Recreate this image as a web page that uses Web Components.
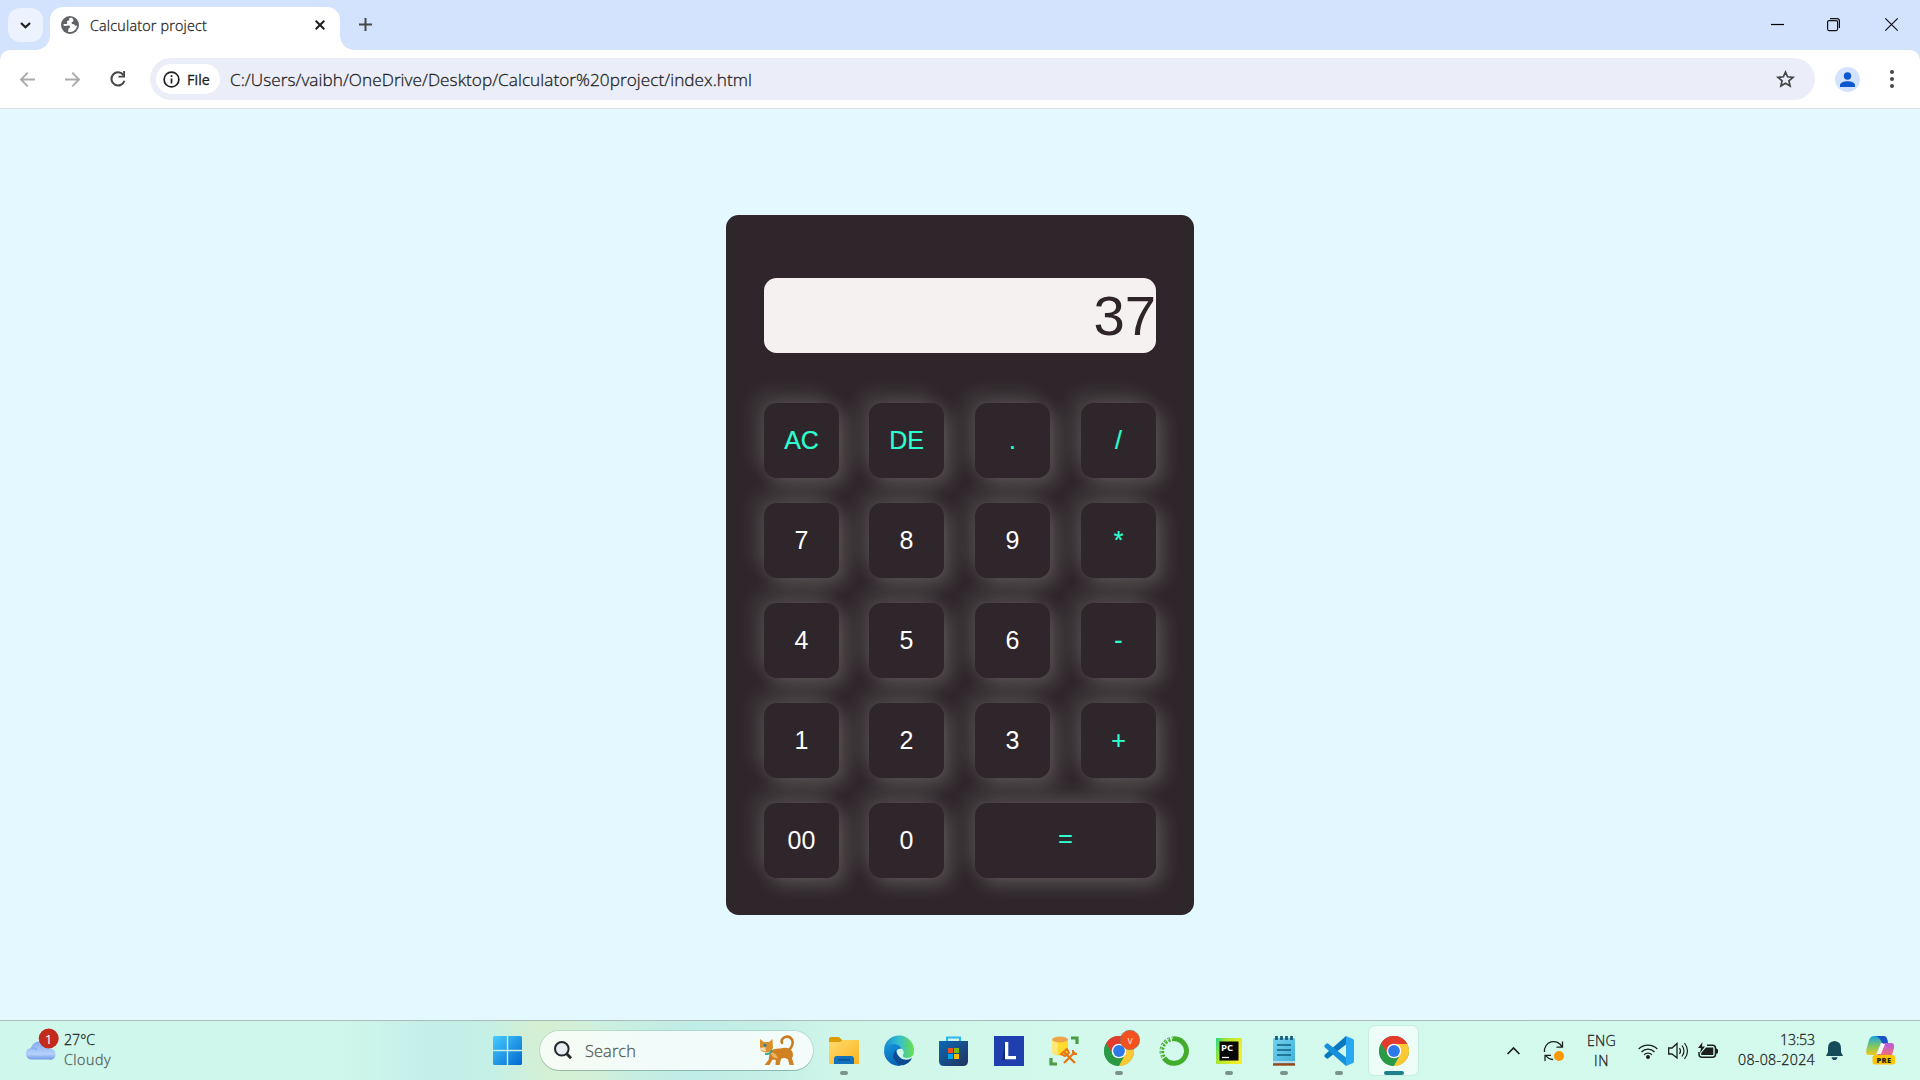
<!DOCTYPE html>
<html lang="en">
<head>
<meta charset="utf-8">
<title>Calculator project</title>
<style>
html,body{margin:0;height:100%;overflow:hidden}
body{font-family:"Open Sans","Noto Sans",sans-serif;color:#1f1f1f}
</style>
</head>
<body>
<desktop-screen></desktop-screen>
<script>
const define=(name,css,html,extra)=>customElements.define(name,class extends HTMLElement{
  connectedCallback(){
    if(this.shadowRoot)return;
    const root=this.attachShadow({mode:'open'});
    const t=document.createElement('template');
    t.innerHTML=`<style>*{box-sizing:border-box}svg{display:block;overflow:visible}${css}</style>${html}`;
    root.append(t.content.cloneNode(true));
    if(extra)extra(this,root);
  }
});

// Text run that spreads its letters to fill the given width.
define('fit-text',`:host{display:block;white-space:nowrap;flex:none;font-weight:300;-webkit-text-stroke:.3px currentColor}span{display:inline-block}`,`<span><slot></slot></span>`,(host,root)=>{
  const s=root.querySelector('span'),n=host.textContent.length,w=+host.getAttribute('w');
  const cur=s.getBoundingClientRect().width;
  s.style.letterSpacing=((w-cur)/n)+'px';
  host.style.width=w+'px';
});

const chromeLogo=`<circle cx="15" cy="15" r="15" fill="#34a853"/><path d="M15 15L2 7.5A15 15 0 0 1 28 7.5L28 8.2H15z" fill="#e33b2e"/><path d="M2 7.5A15 15 0 0 1 28 7.5L15 8.2L9 18.5z" fill="#e33b2e"/><path d="M28 7.6A15 15 0 0 1 14.7 30L21 18.5L15 8H28z" fill="#fcc934"/><path d="M2 7.5A15 15 0 0 0 14.7 30L21.2 18.6L9 18.6z" fill="#2a9a47"/><circle cx="15" cy="15" r="7.3" fill="#fff"/><circle cx="15" cy="15" r="5.9" fill="#2f78e8"/>`;

define('browser-tabs',`
:host{display:flex;height:50px;background:#d3e2fd;align-items:flex-start;padding-left:8px}
.down{width:35px;height:34px;border-radius:12px;background:#ecf2fe;margin:8px 7px 0 0;display:flex;align-items:center;justify-content:center}
.tab{position:relative;width:290px;height:43px;margin-top:7px;background:#fff;border-radius:13px 13px 0 0;display:flex;align-items:center;padding:0 15px 7px 11px}
.tab:before,.tab:after{content:"";position:absolute;bottom:0;width:14px;height:14px}
.tab:before{left:-14px;background:radial-gradient(circle at 0 0,transparent 13.5px,#fff 14px)}
.tab:after{right:-14px;background:radial-gradient(circle at 100% 0,transparent 13.5px,#fff 14px)}
fit-text{font-size:14.3px;margin-left:11px;flex:1;line-height:20px;padding-top:2px}
.plus{margin:18px 0 0 19px}
.win{margin-left:auto;display:flex;gap:44px;padding:18px 22px 0 0}
`,`<div class="down"><svg width="11" height="7"><path d="M1 1L5.5 5.3L10 1" fill="none" stroke="#1f1f1f" stroke-width="2.2"/></svg></div>
<div class="tab"><svg width="18" height="18" viewBox="0 0 18 18"><circle cx="9" cy="9" r="9" fill="#5f6368"/><path d="M11 1.700C8 1.400 7.500 3 8.500 4.200C6.500 4.200 5.400 5.300 6.200 6.700C7 8 5 8.200 3 8C2.600 8.200 2.300 8.600 2.200 9.200C5 10.800 6 9 8 9.600C10 10.300 9 12 7.600 12.400C6.900 13.200 7.500 14.600 7.200 15.900C12 16.800 15.700 13.500 16.100 9.500C14.600 10.200 13 9.400 13.400 8.200C11.500 8.300 10.400 7.600 10.500 6.200C12.700 6 13.200 4 11 1.700z" fill="#fff"/></svg><fit-text w="117">Calculator project</fit-text>
<svg style="margin-left:auto" width="10" height="10"><path d="M.7.7L9.3 9.3M9.3.7L.7 9.3" stroke="#1f1f1f" stroke-width="2"/></svg></div>
<svg class="plus" width="13" height="13"><path d="M6.5 0V13M0 6.5H13" stroke="#444746" stroke-width="2"/></svg>
<div class="win"><svg width="13" height="13"><path d="M0 6.5H13" stroke="#000" stroke-width="1.2"/></svg>
<svg style="margin:0 1px 0 -1px" width="13" height="13"><rect x=".6" y="2.6" width="10" height="10" rx="1.5" fill="none" stroke="#111" stroke-width="1.2"/><path d="M3 .6H10Q12.4.6 12.4 3V10" fill="none" stroke="#111" stroke-width="1.2"/></svg>
<svg width="13" height="13"><path d="M.3.3L12.7 12.7M12.7.3L.3 12.7" stroke="#111" stroke-width="1.2"/></svg></div>`);

define('browser-toolbar',`
:host{display:block;height:59px;background:#d3e2fd}
.bar{height:59px;background:#fff;border-bottom:1px solid #dadde1;border-radius:10px 10px 0 0;display:flex;align-items:center;padding:0 22px 0 20px}
.bar>*{flex:none}
.omni{width:1665px;height:42px;border-radius:21px;background:#ebeef8;display:flex;align-items:center;padding:0 20px 0 6px;margin-left:24px}
.chip{width:64px;height:30px;border-radius:15px;background:#fff;display:flex;align-items:center;padding-left:7px;gap:7px;margin-right:10px}
.chip fit-text{font-size:14.3px;font-weight:400}
.url{font-size:17.2px;padding-top:1px}
.user{width:25px;height:25px;border-radius:50%;background:#d3e3fd;margin:0 30px 0 20px}
`,`<div class="bar"><svg width="15" height="15"><path d="M15 7.5H1M7.7.7L1 7.5L7.7 14.3" fill="none" stroke="#a9abad" stroke-width="1.9"/></svg>
<svg style="margin-left:30px" width="15" height="15"><path d="M0 7.5H14M7.3.7L14 7.5L7.3 14.3" fill="none" stroke="#a9abad" stroke-width="1.9"/></svg>
<svg style="margin-left:30px" width="16" height="16"><path d="M13.5 4.2A6.6 6.6 0 1 0 14.4 9.7" fill="none" stroke="#444746" stroke-width="2"/><path d="M15 0V6.5H8.5V4.7H13.2V0z" fill="#444746"/></svg>
<div class="omni"><div class="chip"><svg width="17" height="17"><circle cx="8.5" cy="8.5" r="7.4" fill="none" stroke="#1f1f1f" stroke-width="1.7"/><path d="M8.5 7.5V12.5M8.5 4.3V6" stroke="#1f1f1f" stroke-width="1.7"/></svg><fit-text w="23">File</fit-text></div>
<fit-text class="url" w="522">C:/Users/vaibh/OneDrive/Desktop/Calculator%20project/index.html</fit-text>
<svg style="margin-left:auto" width="19" height="18" viewBox="0 0 19 18"><path d="M9.5 2L11.6 6.8L17 7.3L12.9 10.8L14.1 16L9.5 13.2L4.9 16L6.1 10.8L2 7.3L7.4 6.8z" fill="none" stroke="#444746" stroke-width="1.7"/></svg></div>
<div class="user"><svg width="25" height="25"><circle cx="12.5" cy="9" r="3.7" fill="#0b57d0"/><path d="M5 20V18C5 15.5 9 14.2 12.5 14.2S20 15.5 20 18V20z" fill="#0b57d0"/></svg></div>
<svg width="4" height="18"><circle cx="2" cy="2" r="2" fill="#444746"/><circle cx="2" cy="9" r="2" fill="#444746"/><circle cx="2" cy="16" r="2" fill="#444746"/></svg></div>`);

define('calc-key',`
:host{display:flex;align-items:center;justify-content:center;width:75px;height:75px;border-radius:12.5px;background:#2e262a;color:#fff;font:25px "Liberation Sans",Arial,sans-serif;box-shadow:-10px -10px 18.75px rgba(250,255,245,.11),6.25px 6.25px 18.75px rgba(250,255,245,.21)}
:host([op]){color:#2dffd0;-webkit-text-stroke:.2px #2dffd0}
:host([wide]){width:181px;padding-bottom:4px}
`,`<slot></slot>`);

define('calc-pad',`
:host{display:block;width:468px;height:700px;border-radius:12.5px;background:#2e262a;padding:63px 38px 0}
.screen{height:75px;border-radius:12.5px;background:#f5f1f0;color:#2f2529;font:56.25px/75px "Liberation Sans",Arial,sans-serif;text-align:right;margin-bottom:50px}
.row{display:grid;grid-template-columns:105px 106px 106px 75px;margin-bottom:25px}
`,`<div class="screen">37</div>
<div class="row"><calc-key op>AC</calc-key><calc-key op>DE</calc-key><calc-key op>.</calc-key><calc-key op>/</calc-key></div>
<div class="row"><calc-key>7</calc-key><calc-key>8</calc-key><calc-key>9</calc-key><calc-key op>*</calc-key></div>
<div class="row"><calc-key>4</calc-key><calc-key>5</calc-key><calc-key>6</calc-key><calc-key op>-</calc-key></div>
<div class="row"><calc-key>1</calc-key><calc-key>2</calc-key><calc-key>3</calc-key><calc-key op>+</calc-key></div>
<div class="row"><calc-key>00</calc-key><calc-key>0</calc-key><calc-key op wide>=</calc-key></div>`);

define('task-app',`
:host{position:relative;display:flex;flex:none;width:49px;height:49px;border-radius:6px;margin-right:6px;align-items:center;justify-content:center}
:host([active]){background:rgba(255,255,255,.6);box-shadow:0 0 0 1px rgba(0,60,50,.06)}
.mark{position:absolute;bottom:0;left:20.5px;width:8px;height:4px;border-radius:2px;background:#7c938c;display:none}
:host([run]) .mark{display:block}
:host([active]) .mark{display:block;left:14.5px;width:20px;background:#20808e}
`,`<slot></slot><div class="mark"></div>`);

define('task-bar',`
:host{display:block;height:60px;border-top:1px solid #a9bcb9;background:
radial-gradient(ellipse 70px 60px at 560px 45px,rgba(218,240,206,.8),transparent),
radial-gradient(ellipse 60px 45px at 545px 0,rgba(214,238,208,.9),transparent),
linear-gradient(90deg,#d0f7ec 0,#d0f7eb 340px,#c3efe9 430px,#c5f0e6 500px,#cdf0df 590px,#c0ece6 690px,#c6f0e6 780px,#d0f6ea 840px,#d3f8ec 1100px,#d4faed 100%)}
.line{display:flex;height:59px;align-items:center}
.line>*{flex:none}
.weather{display:flex;width:491px;padding-left:25px}
.cloud{width:39px;flex:none;margin-top:-9px}
.two{font-size:14.2px;line-height:20px}
.up{position:relative;top:-1px}
.search{width:273px;height:39px;border-radius:20px;background:rgba(255,255,255,.77);box-shadow:0 0 0 1px rgba(80,140,120,.2),0 1px 0 rgba(70,120,105,.35);display:flex;align-items:center;padding:0 18px 0 14px;margin:0 6px 0 18px}
.search fit-text{font-size:16.4px;color:#555d5b;margin:0 auto 0 13px}
.tray{margin-left:auto;display:flex;align-items:center;padding-right:25px}
.tray>*{flex:none}
`,`<div class="line"><div class="weather"><svg class="cloud" width="39" height="40" viewBox="0 0 39 40"><defs><linearGradient id="c" x2="0" y2="1"><stop stop-color="#83acf0"/><stop offset=".7" stop-color="#b5d0fb"/><stop offset="1" stop-color="#6d98e5"/></linearGradient></defs><path d="M6 37.5A5.8 5.8 0 0 1 6 26A9 9 0 0 1 22 23Q25 25 24 27A5.4 5.4 0 1 1 24 37.5z" fill="url(#c)"/><path d="M6 26Q10 25 12 28" fill="none" stroke="#739ce8"/><circle cx="23.700" cy="16.500" r="10" fill="#c42b1c"/><text x="23.700" y="21.500" text-anchor="middle" fill="#fff" font-size="13.5">1</text></svg>
<div class="two up"><fit-text w="31">27°C</fit-text><fit-text w="47" style="color:#53625e">Cloudy</fit-text></div></div>
<svg style="margin-left:2px" width="29" height="29"><defs><linearGradient id="w" x2="1" y2="1"><stop stop-color="#48ccff"/><stop offset="1" stop-color="#0068d0"/></linearGradient></defs><path d="M1.5 0H13.8V13.8H0V1.5Q0 0 1.5 0zM15.2 0H27.5Q29 0 29 1.5V13.8H15.2zM0 15.2H13.8V29H1.5Q0 29 0 27.5zM15.2 15.2H29V27.5Q29 29 27.5 29H15.2z" fill="url(#w)"/></svg>
<div class="search"><svg width="18" height="19"><circle cx="7.8" cy="7.8" r="6.8" fill="#e7edf0" stroke="#20282b" stroke-width="2"/><path d="M12.7 12.7L17 17.3" stroke="#20282b" stroke-width="2.8"/></svg><fit-text w="51">Search</fit-text>
<svg width="37" height="31" viewBox="0 0 37 31"><path d="M32 14Q36 9 34 4.500Q31 0 26 2.500Q22.500 5 24 8" fill="none" stroke="#c97a20" stroke-width="2.500" stroke-linecap="round"/><path d="M12 16Q16 13 22 13.500Q31 11 34 16Q36 20 34 23L36 30H31.500L30 24.500Q26 22 23 24L21.500 30H17.500L17.800 25L14.500 24.500L11.500 30H6.500L10.500 25z" fill="#cf8123"/><path d="M2 4L6 7H11L14.500 4L15 13Q13 18 8 17.500Q2 17 2 12z" fill="#d9912e"/><path d="M13 18Q14 24 20 23Q16 16 13 18z" fill="#eeb35f"/><path d="M1.500 13Q4 17 8 16L7 12z" fill="#f5dcae"/><path d="M7 19Q12 20 14 15" stroke="#28a7a0" stroke-width="1.800" fill="none"/><circle cx="7" cy="10.300" r="1.500" fill="#267dab"/></svg></div>
<task-app run><svg width="30" height="27"><defs><linearGradient id="f" x2="1" y2="1"><stop stop-color="#ffdb6e"/><stop offset="1" stop-color="#fbb31f"/></linearGradient></defs><path d="M0 2Q0 0 2 0H10L14 4V9H0z" fill="#dc9c08"/><path d="M0 5H11L14 3H30V27H1.500Q0 27 0 25.500z" fill="url(#f)"/><path d="M5 27V22Q5 19 8 19H22Q25 19 25 22V27z" fill="#1271bd"/><path d="M9 22.800H21" stroke="#084f8c" stroke-width="1.300"/></svg></task-app>
<task-app><svg width="30" height="30"><defs><linearGradient id="e1" x1="0" x2="1"><stop stop-color="#168bd1"/><stop offset=".5" stop-color="#34bfcf"/><stop offset="1" stop-color="#6be047"/></linearGradient><linearGradient id="e2" x2=".5" y2="1"><stop stop-color="#1597de"/><stop offset="1" stop-color="#0760b2"/></linearGradient></defs><path d="M0 14A15 15 0 0 1 30 15Q30 22 23 22Q18 22 19 19Q21 16 17.500 12Q9 5 0 14z" fill="url(#e1)"/><path d="M0 15Q2 8 9 8Q15 8 18 13Q12 12 12 18Q13 26 21 27Q18 30 15 30A15 15 0 0 1 0 15z" fill="url(#e2)"/><path d="M12 14Q8 18 10 23Q14 30 20 29Q26 27 28 22Q24 25 18 23Q13 20 12 14z" fill="#0c4a94"/></svg></task-app>
<task-app><svg width="29" height="30"><defs><linearGradient id="s" x2="1" y2="1"><stop stop-color="#0a68b7"/><stop offset="1" stop-color="#22325b"/></linearGradient></defs><path d="M8 6V1.500H21V6" fill="none" stroke="#29b8ed" stroke-width="2"/><path d="M0 5H29V25Q29 30 24 30H5Q0 30 0 25z" fill="url(#s)"/><path d="M9 12h5v5H9z" fill="#f25022"/><path d="M15 12h5v5h-5z" fill="#7fba00"/><path d="M9 18h5v5H9z" fill="#00a4ef"/><path d="M15 18h5v5h-5z" fill="#ffb900"/></svg></task-app>
<task-app><svg width="30" height="30"><rect width="30" height="30" fill="#1f3fae"/><path d="M11 6L8 24H13z" fill="#102b72"/><path d="M11 6H14.300V20H22V23.300H11z" fill="#fff"/></svg></task-app>
<task-app><svg width="30" height="30"><path d="M22 2H28V8M2 22V28H8" fill="none" stroke="#4c9b48" stroke-width="3.200"/><path d="M3 3V17Q11 22 19 17V3z" fill="#ffdb2e"/><path d="M3 3H9V19Q5 19 3 17z" fill="#ffe77a"/><ellipse cx="11" cy="3.500" rx="8" ry="3" fill="#eda54b"/><path d="M15 27L26 16M15 16L26 27" stroke="#e77818" stroke-width="2.300"/><path d="M12 18L18 13L20 17L16 20zM24 14L24 18L28 18" fill="none" stroke="#e77818" stroke-width="2"/></svg></task-app>
<task-app run><svg width="30" height="30">${chromeLogo}<circle cx="26" cy="4" r="9.700" fill="#f4511e" stroke="#8a7460" stroke-width=".7"/><text x="26" y="7.500" text-anchor="middle" font-size="10.500" fill="#ffe8df">v</text></svg></task-app>
<task-app><svg width="30" height="30"><path d="M15 2.700A12.300 12.300 0 1 1 5 22" fill="none" stroke="#43ad2b" stroke-width="5"/><path d="M15 2.700A12.300 12.300 0 0 0 5 22" fill="none" stroke="#43ad2b" stroke-width="4.500" stroke-dasharray="2.300 1.500"/><path d="M14 2A13 13 0 0 0 4 22" fill="none" stroke="#d5f8ec" stroke-width="1" stroke-dasharray="2 2"/></svg></task-app>
<task-app run><svg width="26" height="26"><defs><linearGradient id="p" x2="1" y2=".4"><stop stop-color="#21d789"/><stop offset=".35" stop-color="#a8e532"/><stop offset="1" stop-color="#f4ee2a"/></linearGradient></defs><rect width="26" height="26" fill="url(#p)"/><rect x="3.500" y="3.500" width="19" height="19" fill="#080808"/><text x="5" y="13" font-size="9.500" font-weight="700" fill="#fff">PC</text><path d="M6 19.500H13" stroke="#fff" stroke-width="1.300"/></svg></task-app>
<task-app run><svg width="22" height="30"><defs><linearGradient id="n" x2="1" y2="1"><stop stop-color="#72d2ee"/><stop offset="1" stop-color="#3fb0d9"/></linearGradient></defs><rect y="2" width="22" height="26" rx="1.500" fill="url(#n)"/><path d="M0 26H22" stroke="#eee" stroke-width="1.300"/><path d="M0 28.500H22" stroke="#994a16" stroke-width="2.400"/><path d="M4 9H18M4 14H18M4 19H18" stroke="#11607e" stroke-width="1.600"/><path d="M3.500 0V4M8.500 0V4M13.500 0V4M18.500 0V4" stroke="#1a5f79" stroke-width="2.800"/></svg></task-app>
<task-app run><svg width="30" height="30"><path d="M22 0L29 3Q30 3.500 30 5V25Q30 26.500 29 27L22 30z" fill="#28a8f2"/><path d="M22 0V8.500L4 22.500Q3 23 2 22L.5 20.500Q0 19.500 1 18.500z" fill="#0878bf"/><path d="M22 30V21.500L4 7.500Q3 7 2 8L.5 9.500Q0 10.500 1 11.500z" fill="#168fdc"/></svg></task-app>
<task-app active><svg width="30" height="30">${chromeLogo}</svg></task-app>
<div class="tray"><svg width="13" height="8"><path d="M.6 7L6.500 1L12.400 7" fill="none" stroke="#1b1f1e" stroke-width="1.700"/></svg>
<svg style="margin-left:24px" width="20" height="20"><path d="M.5 11A9.200 9.200 0 0 1 18 6M18.500.5V6.200H12.500M9 18.500A9 9 0 0 1 1.500 14M1 20V14.300H7" fill="none" stroke="#1b1f1e" stroke-width="1.300"/><circle cx="15" cy="15" r="5" fill="#ff9800"/></svg>
<div class="two" style="margin:0 22px 0 23px;display:flex;flex-direction:column;align-items:center"><fit-text w="29">ENG</fit-text><fit-text w="15">IN</fit-text></div>
<svg width="20" height="16"><path d="M.7 6A13 13 0 0 1 19.300 6M3.500 9A9 9 0 0 1 16.500 9M6.200 11.800A5.300 5.300 0 0 1 13.800 11.800" fill="none" stroke="#1b1f1e" stroke-width="1.300"/><circle cx="10" cy="14" r="2" fill="#1b1f1e"/></svg>
<svg style="margin-left:10px" width="20" height="18"><path d="M.7 6H4L9 1.500V16L4 12H.7z" fill="none" stroke="#1b1f1e" stroke-width="1.300"/><path d="M11.500 6Q13.500 9 11.500 12M14 3.500Q18 9 14 14.500M16.500 1Q22.500 9 16.500 17" fill="none" stroke="#1b1f1e" stroke-width="1.200"/></svg>
<svg style="margin-left:10px" width="20" height="16"><path d="M9 2.200H14.500Q17.500 2.200 17.500 5.200V11.200Q17.500 14.200 14.500 14.200H4Q1 14.200 1 11.200V9" fill="none" stroke="#1b1f1e" stroke-width="1.500"/><path d="M3.200 12V10L8 4.400H15.300V12zM18 5.500Q20 5.500 20 7V9.300Q20 10.800 18 10.800z" fill="#1b1f1e"/><path d="M4.500-1L0 5H3L2 10L7 3.500H4z" fill="#1b1f1e"/></svg>
<div class="two up" style="margin-left:20px;display:flex;flex-direction:column;align-items:flex-end"><fit-text w="35">13:53</fit-text><fit-text w="77">08-08-2024</fit-text></div>
<svg style="margin-left:11px" width="17" height="19"><path d="M8.500 0Q15 .5 15 7V11L17 15H0L2 11V7Q2 .5 8.500 0zM5.500 16.200H11.500Q11 19 8.500 19T5.500 16.200z" fill="#154c59"/></svg>
<svg style="margin-left:23px" width="29" height="29"><defs><linearGradient id="k1" x2="0" y2="1"><stop stop-color="#1ba5df"/><stop offset=".6" stop-color="#8bc958"/><stop offset="1" stop-color="#f5c621"/></linearGradient><linearGradient id="k2" x2="0" y2="1"><stop stop-color="#b55be8"/><stop offset="1" stop-color="#f26e73"/></linearGradient></defs><path d="M8 0H18Q21 0 22 7H15L10 19H3Q-1 19 .5 13L3 4Q4.500 0 8 0z" fill="url(#k1)"/><path d="M9 0H18Q21 0 22 7H16Q14 1 9 0z" fill="#1a52c8"/><path d="M17 7H25Q29 7 28 12L26 19H10Q14 18 15 13z" fill="url(#k2)"/><path d="M15 8H19L15 18H11z" fill="#fff"/><rect x="6.500" y="19" width="22.500" height="9.500" rx="2.500" fill="#ffc400"/><text x="18" y="26.500" text-anchor="middle" font-size="7.500" font-weight="800" fill="#1f1f1f" letter-spacing=".4">PRE</text></svg>
</div></div>`);

define('desktop-screen',`
:host{display:flex;flex-direction:column;width:1920px;height:1080px;background:#e3f8ff}
main{flex:1;display:flex;justify-content:center;align-items:flex-start;padding-top:106px}
`,`<browser-tabs></browser-tabs><browser-toolbar></browser-toolbar><main><calc-pad></calc-pad></main><task-bar></task-bar>`);
</script>
</body>
</html>
